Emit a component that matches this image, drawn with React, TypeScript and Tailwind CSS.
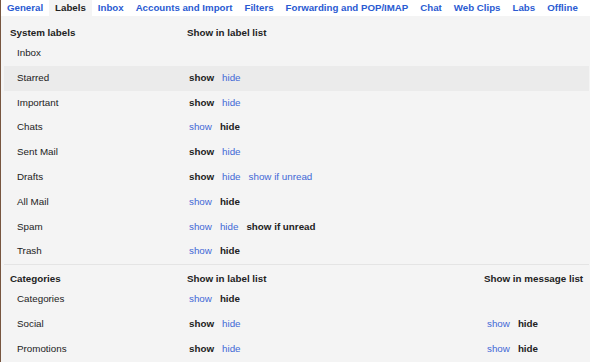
import React from "react";

type Opt = { text: string; active: boolean };

const tabs = [
  "General",
  "Labels",
  "Inbox",
  "Accounts and Import",
  "Filters",
  "Forwarding and POP/IMAP",
  "Chat",
  "Web Clips",
  "Labs",
  "Offline",
];

function Options({ opts }: { opts: Opt[] }) {
  return (
    <div className="flex gap-[8px]">
      {opts.map((o, i) =>
        o.active ? (
          <span key={i} className="font-bold text-[#222]">
            {o.text}
          </span>
        ) : (
          <span key={i} className="text-[#3f68d6] cursor-pointer">
            {o.text}
          </span>
        )
      )}
    </div>
  );
}

const S = (t: string, a: boolean): Opt => ({ text: t, active: a });
const showHide = (show: boolean) => [S("show", show), S("hide", !show)];

const systemRows: { name: string; opts: Opt[]; hl?: boolean }[] = [
  { name: "Inbox", opts: [] },
  { name: "Starred", opts: showHide(true), hl: true },
  { name: "Important", opts: showHide(true) },
  { name: "Chats", opts: showHide(false) },
  { name: "Sent Mail", opts: showHide(true) },
  { name: "Drafts", opts: [S("show", true), S("hide", false), S("show if unread", false)] },
  { name: "All Mail", opts: showHide(false) },
  { name: "Spam", opts: [S("show", false), S("hide", false), S("show if unread", true)] },
  { name: "Trash", opts: showHide(false) },
];

const catRows: { name: string; opts: Opt[]; msg?: Opt[] }[] = [
  { name: "Categories", opts: showHide(false) },
  { name: "Social", opts: showHide(true), msg: showHide(false) },
  { name: "Promotions", opts: showHide(true), msg: showHide(false) },
];

export default function App() {
  return (
    <div
      className="w-[590px] h-[362px] overflow-hidden flex text-[9.8px] text-[#222]"
      style={{ fontFamily: '"Liberation Sans", Arial, sans-serif' }}
    >
      <div className="w-[1px] shrink-0 bg-[#77563f]" />
      <div className="flex-1 flex flex-col bg-[#f4f4f4]">
        <div className="h-[16px] bg-white flex items-stretch">
          {tabs.map((t) => (
            <div
              key={t}
              className={
                "px-[6px] leading-[16px] font-bold text-[9.7px] " +
                (t === "Labels" ? "bg-[#f4f4f4] text-[#222]" : "text-[#2a5bd2]")
              }
            >
              {t}
            </div>
          ))}
        </div>
        <div className="pl-[3px] pr-[1px] flex flex-col">
          <div className="pt-[9px] pl-[6px] flex leading-[16px] font-bold">
            <div className="w-[177px]">System labels</div>
            <div>Show in label list</div>
          </div>
          {systemRows.map((r) => (
            <div
              key={r.name}
              className={
                "h-[24.8px] pl-[13px] flex items-center " + (r.hl ? "bg-[#ebebeb]" : "")
              }
            >
              <div className="w-[172px]">{r.name}</div>
              <Options opts={r.opts} />
            </div>
          ))}
          <div className="h-[1px] bg-[#e4e4e4]" />
          <div className="pt-[6px] pl-[6px] flex leading-[16px] font-bold">
            <div className="w-[177px]">Categories</div>
            <div className="w-[297px]">Show in label list</div>
            <div>Show in message list</div>
          </div>
          {catRows.map((r) => (
            <div key={r.name} className="h-[24.8px] pl-[13px] flex items-center">
              <div className="w-[172px]">{r.name}</div>
              <div className="w-[298px]">
                <Options opts={r.opts} />
              </div>
              {r.msg && <Options opts={r.msg} />}
            </div>
          ))}
        </div>
      </div>
    </div>
  );
}
